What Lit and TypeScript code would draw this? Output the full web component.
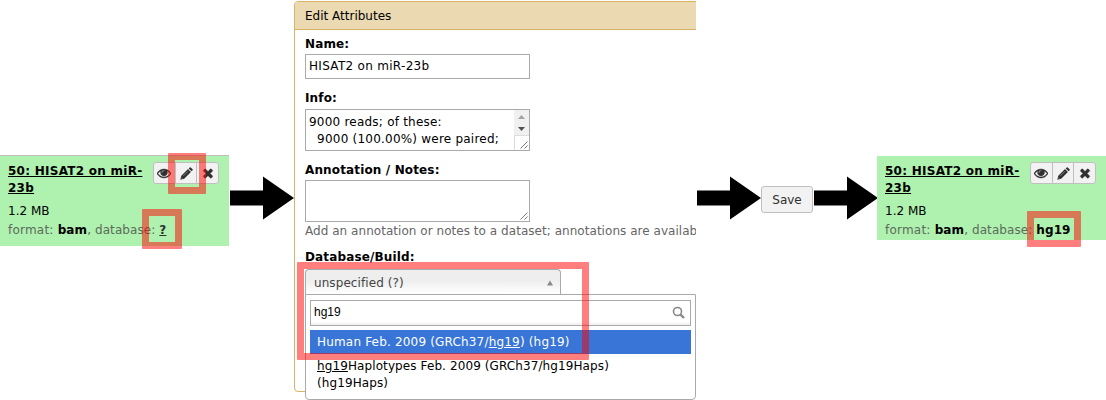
import { LitElement, html, css, svg } from "lit";
import { customElement, property } from "lit/decorators.js";

const EYE = "M1664 960q-152-236-381-353 61 104 61 225 0 185-131.500 316.500t-316.500 131.500-316.500-131.500-131.500-316.500q0-121 61-225-229 117-381 353 133 205 333.500 326.500t434.500 121.500 434.500-121.500 333.500-326.500zm-720-384q0-20-14-34t-34-14q-125 0-214.500 89.500t-89.500 214.500q0 20 14 34t34 14 34-14 14-34q0-86 61-147t147-61q20 0 34-14t14-34zm848 384q0 34-20 69-140 230-376.500 368.500t-499.500 138.500-499.500-139-376.500-368q-20-35-20-69t20-69q140-229 376.500-368t499.500-139 499.500 139 376.500 368q20 35 20 69z";
const TIMES = "M1490 1322q0 40-28 68l-136 136q-28 28-68 28t-68-28l-294-294-294 294q-28 28-68 28t-68-28l-136-136q-28-28-28-68t28-68l294-294-294-294q-28-28-28-68t28-68l136-136q28-28 68-28t68 28l294 294 294-294q28-28 68-28t68 28l136 136q28 28 28 68t-28 68l-294 294 294 294q28 28 28 68z";

const icon = (d: string, size: number) =>
  html`<svg width=${size} height=${size} viewBox="0 0 1792 1792">${svg`<path fill="#303030" stroke="#303030" stroke-width="50" d=${d}></path>`}</svg>`;

const pencil = () => html`<svg width="13" height="13" viewBox="0 0 13 13">
  <path d="M.3 12.700 1.300 8.800 8 2.100 10.900 5 4.200 11.700ZM8.700 1.400 9.700.4Q10.200 0 10.700.4L12.600 2.300Q13 2.800 12.600 3.300L11.600 4.300Z" fill="#303030" />
  <path d="M3.200 9 8 4.200" stroke="#999" stroke-width=".7" />
  <path d="M1.300 10.600 2.400 11.700" stroke="#ccc" stroke-width=".6" />
</svg>`;

@customElement("dataset-card")
export class DatasetCard extends LitElement {
  @property() database = "?";
  @property({ type: Boolean, reflect: true }) edited = false;

  static styles = css`
    :host { display: block; box-sizing: border-box; width: 229px; height: 91px; padding: 7px 10px 0 8px;
      background: #aff1af; border-top: 1px solid #bfbfbf; font-size: 12px; line-height: 17px; color: #000; }
    :host([edited]) { height: 84px; border-top: 0; }
    .head { display: flex; justify-content: space-between; height: 35px; }
    .title { width: 140px; font-weight: bold; text-decoration: underline; white-space: nowrap; letter-spacing: 0.26px; }
    .buttons { display: flex; box-sizing: border-box; width: 66px; height: 22px; margin-top: -1px; border: 1px solid #bfbfbf;
      border-radius: 3px; background: #f2f2f2; flex: none; }
    .btn { display: flex; flex: 1; align-items: center; justify-content: center; }
    .btn + .btn { border-left: 1px solid #bfbfbf; }
    .size { margin-top: 5px; height: 19px; }
    .meta { color: #5c6b5c; white-space: nowrap; letter-spacing: 0.09px; }
    .key { letter-spacing: 0.22px; }
    b { color: #000; }
    .unknown { color: #303030; text-decoration: underline; }
  `;

  render() {
    return html`
      <div class="head">
        <div class="title">50: HISAT2 on miR-<br />23b</div>
        <div class="buttons">
          <span class="btn">${icon(EYE, 14)}</span>
          <span class="btn">${pencil()}</span>
          <span class="btn">${icon(TIMES, 14)}</span>
        </div>
      </div>
      <div class="size">1.2 MB</div>
      <div class="meta"><span class="key">format: </span><b>bam</b>, database: <b class=${this.edited ? "" : "unknown"}>${this.database}</b></div>
    `;
  }
}

@customElement("flow-arrow")
export class FlowArrow extends LitElement {
  static styles = css`:host, svg { display: block; }`;
  render() {
    return html`<svg width="64" height="44" viewBox="0 0 64 44"><path d="M0 14.500H33V.5L64 22 33 43.500V29.500H0Z" /></svg>`;
  }
}

@customElement("attributes-panel")
export class AttributesPanel extends LitElement {
  static styles = css`
    :host { display: block; width: 402px; height: 400px; overflow: hidden; font-size: 12px; line-height: 17px; color: #000; }
    .panel { box-sizing: border-box; width: 440px; height: 391px; margin-top: 1px;
      border: 1px solid #d8b365; border-radius: 4px; }
    .header { box-sizing: border-box; height: 28px; padding: 6px 10px 4px; background: #ebd9b2;
      border-bottom: 1px solid #d8b365; border-radius: 3px 0 0 0; }
    .form { padding: 0 10px; }
    .label { height: 17px; font-weight: bold; letter-spacing: 0.14px; }
    .name { margin-top: 6px; }
    .info { margin-top: 11px; }
    .notes { margin-top: 11px; }
    .db { margin-top: 9px; }
    .field { box-sizing: border-box; width: 225px; border: 1px solid #aaa; background: #fff; display: flex; }
    .input { height: 25px; margin-top: 1px; padding: 3px; letter-spacing: 0.3px; }
    .area { height: 42px; margin-top: 2px; justify-content: space-between; overflow: hidden; }
    .empty { margin-top: 1px; }
    .value { padding: 4px 0 0 3px; white-space: pre; letter-spacing: 0.22px; }
    .scroll { display: flex; flex-direction: column; width: 15px; background: #f0f0f0; }
    .help { height: 17px; margin-top: 1px; color: #666; white-space: nowrap; letter-spacing: 0.04px; }
    .grip { margin: auto 1px 1px auto; }
    svg { display: block; flex: none; }
    .select { box-sizing: border-box; display: flex; align-items: center; justify-content: space-between; width: 256px;
      height: 25px; margin-top: 3px; padding: 2px 7px 0 8px; border: 1px solid #aaa; border-bottom: 0;
      border-radius: 4px 4px 0 0; background: linear-gradient(#eee, #eee 45%, #fff); color: #444; letter-spacing: 0.08px; }
    .menu { position: relative; box-sizing: border-box; width: 391px; height: 106px; padding: 5px 4px; border: 1px solid #aaa;
      border-radius: 0 0 4px 4px; background: #fff; }
    .search { box-sizing: border-box; display: flex; align-items: center; justify-content: space-between; height: 26px;
      padding: 0 4px 1px 3px; border: 1px solid #aaa; background: linear-gradient(#fff 85%, #eee);
      font-family: "Liberation Sans", Arial, sans-serif; }
    .option { padding: 4px 7px 3px; letter-spacing: 0.1px; }
    .active { margin-top: 4px; background: #3875d7; color: #fff; letter-spacing: 0.18px; }
  `;

  grip() {
    return html`<svg class="grip" width="8" height="8" viewBox="0 0 8 8"><path d="M.5 7.500 7.500.5M4.500 7.500l3-3" stroke="#777" fill="none" /></svg>`;
  }

  render() {
    return html`
      <div class="panel">
        <div class="header">Edit Attributes</div>
        <div class="form">
          <div class="label name">Name:</div>
          <div class="field input">HISAT2 on miR-23b</div>
          <div class="label info">Info:</div>
          <div class="field area">
            <div class="value">9000 reads; of these:
  9000 (100.00%) were paired;</div>
            <div class="scroll">
              <svg width="15" height="25" viewBox="0 0 15 25"><path d="M4 9h7L7.500 5z" fill="#a3a3a3" /><path d="M4 17h7l-3.500 4z" fill="#505050" /></svg>
              <svg width="15" height="15" viewBox="0 0 15 15"><path d="M0 0h15v15H0z" fill="#dcdcdc" /><path d="M1 1h14v14H1z" fill="#fff" /><path d="M6.500 13.500l7-7M10.500 13.500l3-3" stroke="#777" /></svg>
            </div>
          </div>
          <div class="label notes">Annotation / Notes:</div>
          <div class="field area empty">${this.grip()}</div>
          <div class="help">Add an annotation or notes to a dataset; annotations are availab</div>
          <div class="label db">Database/Build:</div>
          <div class="select">
            <span>unspecified (?)</span>
            <svg width="6" height="6" viewBox="0 0 6 6"><path d="M0 5.500h6L3 .5z" fill="#888" /></svg>
          </div>
          <div class="menu">
            <div class="search">
              <span>hg19</span>
              <svg width="14" height="14" viewBox="0 0 14 14" fill="none" stroke="#888"><circle cx="5.500" cy="5.500" r="4" stroke-width="1.600" /><path d="M8.500 8.500l3.500 3.500" stroke-width="2.400" /></svg>
            </div>
            <div class="option active">Human Feb. 2009 (GRCh37/<u>hg19</u>) (hg19)</div>
            <div class="option"><u>hg19</u>Haplotypes Feb. 2009 (GRCh37/hg19Haps)<br />(hg19Haps)</div>
          </div>
        </div>
      </div>
    `;
  }
}

@customElement("app-root")
export class AppRoot extends LitElement {
  static styles = css`
    :host { display: block; position: relative; width: 1106px; height: 400px; overflow: hidden; background: #fff;
      font-family: "DejaVu Sans", Verdana, sans-serif; }
    .flow { display: flex; align-items: flex-start; }
    .before { margin-top: 155px; }
    .after { margin-top: 156px; margin-left: -1px; }
    flow-arrow { margin: 176px 0 0 1px; }
    .save { box-sizing: border-box; width: 52px; height: 27px; margin-top: 186px; padding: 1px 0 0; border: 1px solid #bfbfbf;
      border-radius: 3px; background: #f2f2f2; color: #303030; font: 12px/17px "DejaVu Sans", Verdana, sans-serif; }
    .mark { position: absolute; box-sizing: border-box; border: 7px solid rgba(255, 0, 0, 0.5); border-radius: 1px; }
    .m-edit { left: 168px; top: 153px; width: 38px; height: 41px; }
    .m-unknown { left: 142px; top: 209px; width: 40px; height: 40px; }
    .m-build { left: 297px; top: 262px; width: 292px; height: 98px; }
    .m-result { left: 1027px; top: 211px; width: 54px; height: 36px; }
  `;

  render() {
    return html`
      <div class="flow">
        <dataset-card class="before"></dataset-card>
        <flow-arrow></flow-arrow>
        <attributes-panel></attributes-panel>
        <flow-arrow></flow-arrow>
        <button class="save">Save</button>
        <flow-arrow></flow-arrow>
        <dataset-card class="after" edited database="hg19"></dataset-card>
      </div>
      <div class="mark m-edit"></div>
      <div class="mark m-unknown"></div>
      <div class="mark m-build"></div>
      <div class="mark m-result"></div>
    `;
  }
}
